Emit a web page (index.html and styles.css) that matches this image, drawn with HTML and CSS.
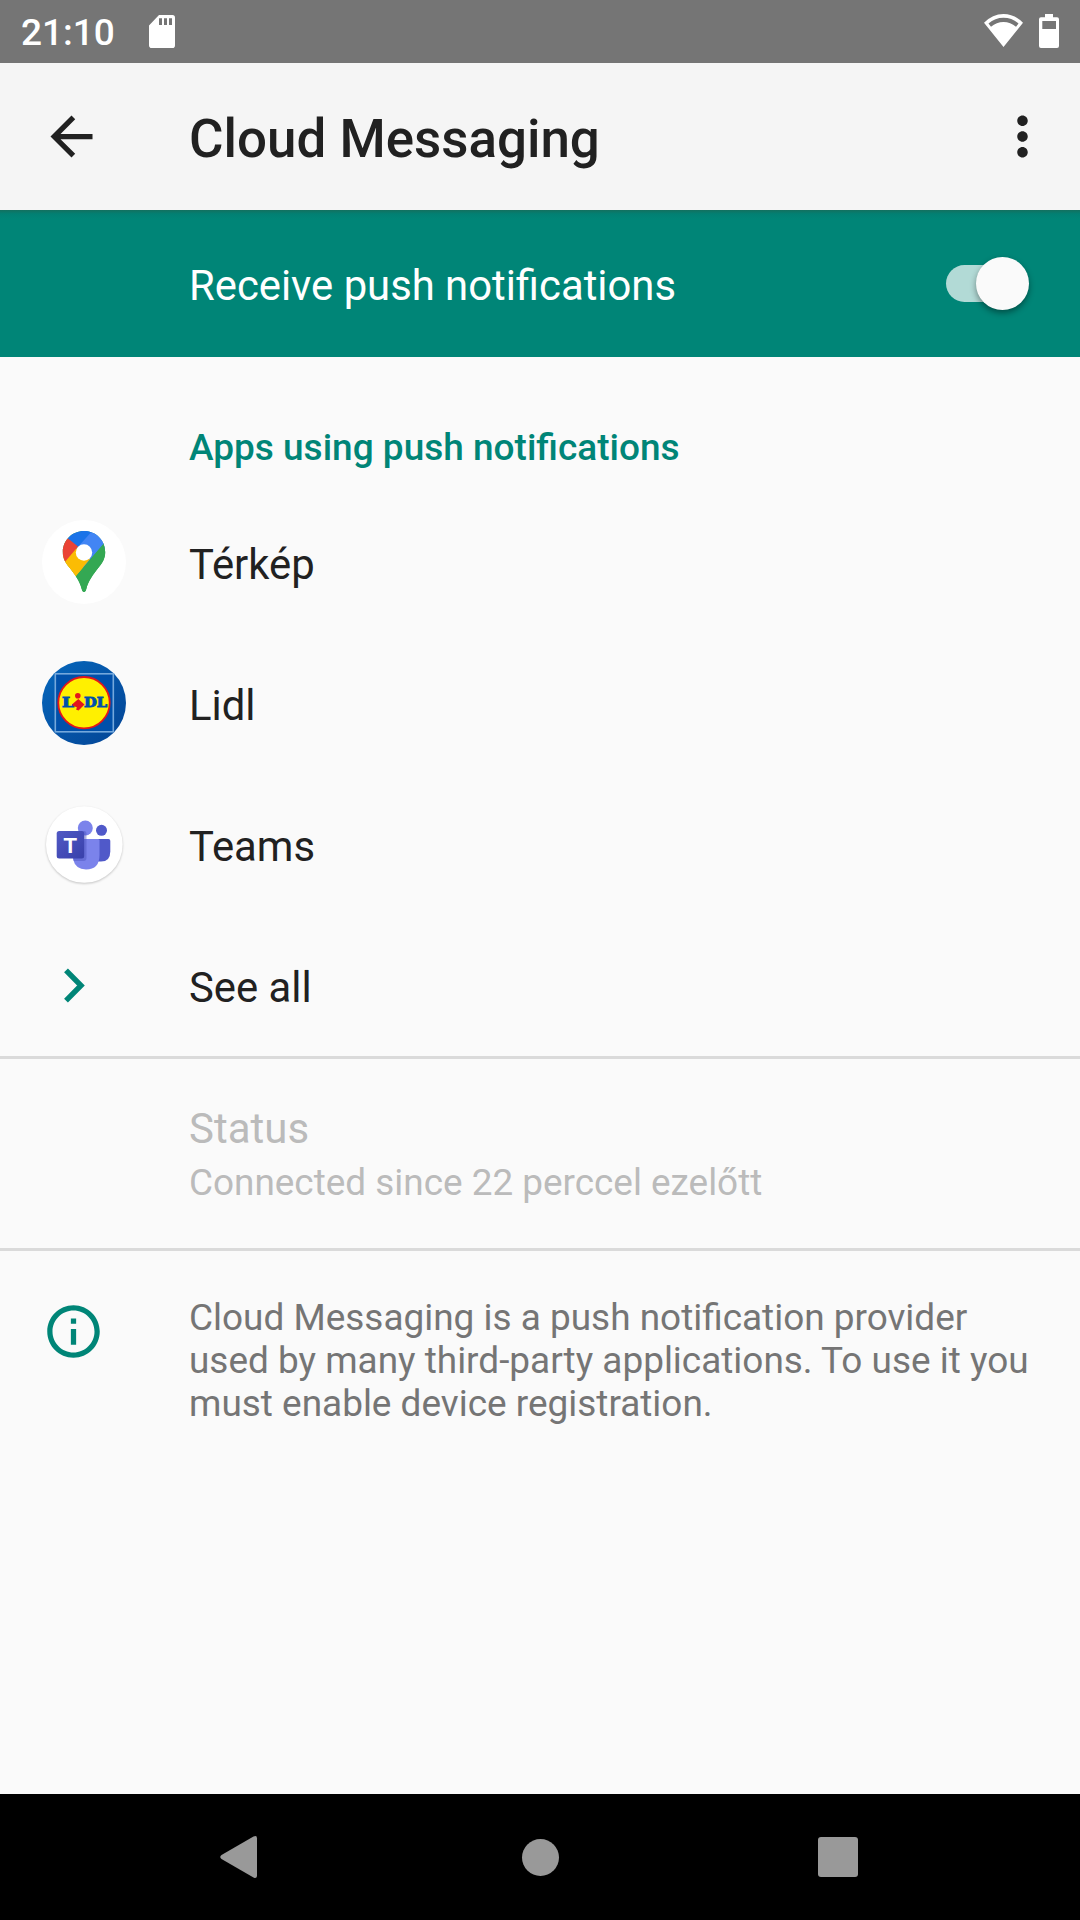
FILE: index.html
```html
<!DOCTYPE html>
<html lang="en">
<head>
<meta charset="utf-8">
<title>Cloud Messaging</title>
<link rel="stylesheet" href="styles.css">
</head>
<body>
<div class="screen">
  <div class="status-bar">
    <span class="clock">21:10</span>
    <svg class="sd-card" width="26" height="33" viewBox="0 0 26 33"><path fill="#fff" fill-rule="evenodd" d="M10 0H23.500Q26 0 26 2.800V30.200Q26 33 23.500 33H2.800Q0 33 0 30.200V10.500ZM10 3.300V10h3V3.300ZM15 3.300V10h3V3.300ZM20 3.300V10h3V3.300Z"/></svg>
    <svg class="wifi" width="39" height="33" viewBox="0 0 39 33"><path fill="#fff" fill-rule="evenodd" d="M19.500 33L0 8.800Q8.500 0 19.500 0T39 8.800ZM4.500 9.500L7 12.700Q12.500 8 19.500 8T32 12.700L34.500 9.500Q28 3.800 19.500 3.800T4.500 9.500Z"/></svg>
    <svg class="battery" width="20" height="34" viewBox="0 0 20 34"><path fill="#fff" fill-rule="evenodd" d="M6 0H14V3.300H18Q20 3.300 20 5.300V32Q20 34 18 34H2Q0 34 0 32V5.300Q0 3.300 2 3.300H6ZM3.300 7V15H17V7Z"/></svg>
  </div>

  <header class="app-bar">
    <svg class="back" width="63" height="63" viewBox="0 0 24 24"><path fill="#212121" d="M20 11H7.830l5.590-5.590L12 4l-8 8 8 8 1.410-1.410L7.830 13H20z"/></svg>
    <h1 class="title">Cloud Messaging</h1>
    <svg class="more" width="63" height="63" viewBox="0 0 24 24"><path fill="#212121" d="M12 8c1.100 0 2-.9 2-2s-.9-2-2-2-2 .9-2 2 .9 2 2 2zm0 2c-1.100 0-2 .9-2 2s.9 2 2 2 2-.9 2-2-.9-2-2-2zm0 6c-1.100 0-2 .9-2 2s.9 2 2 2 2-.9 2-2-.9-2-2-2z"/></svg>
  </header>

  <div class="switch-bar">
    <span class="switch-label">Receive push notifications</span>
    <div class="switch"><div class="thumb"></div></div>
  </div>

  <main class="content">
    <h2 class="category">Apps using push notifications</h2>

    <div class="row">
      <div class="icon-slot">
        <svg width="84" height="84" viewBox="0 0 84 84">
          <defs><clipPath id="pin"><path d="M42 11C30 11 20.800 20.500 20.800 32C20.800 38 23 42 27 47C33 55 37.500 60 39.700 69C40.300 71.300 41 72 42 72S43.700 71.300 44.300 69C46.500 60 51 55 57 47C61 42 63.200 38 63.200 32C63.200 20.500 54 11 42 11Z"/></clipPath></defs>
          <circle cx="42" cy="42" r="42" fill="#fff"/>
          <g clip-path="url(#pin)">
            <rect x="18" y="9" width="48" height="65" fill="#34a853"/>
            <path fill="#fbbc04" d="M14 38L38 25L54 34L33.500 56.500L26 63L14 50Z"/>
            <path fill="#4285f4" d="M46 9L70 9V22L42 49L34 40L36 25Z"/>
            <path fill="#34a853" d="M33.500 56.500L64 20.500L74 30V76H30Z"/>
            <path fill="#fbbc04" d="M33.500 56.500L48 39L36 26L23 43Z"/>
            <path fill="#4285f4" d="M36 26L52 9H70V14L48 39Z"/>
            <path fill="#1a73e8" d="M20 13L26 9H52L34 29L26 19Z"/>
            <path fill="#ea4335" d="M26 18.500L36 26.500L22 43L10 40V20Z"/>
          </g>
          <circle cx="42" cy="32.500" r="8.200" fill="#fff"/>
        </svg>
      </div>
      <span class="label">Térkép</span>
    </div>

    <div class="row">
      <div class="icon-slot">
        <svg width="84" height="84" viewBox="0 0 84 84">
          <defs><linearGradient id="blue" x1="0" y1="0" x2="1" y2="1"><stop offset="0" stop-color="#0668bd"/><stop offset=".5" stop-color="#0555a8"/><stop offset="1" stop-color="#034495"/></linearGradient></defs>
          <circle cx="42" cy="42" r="42" fill="url(#blue)"/>
          <rect x="13.300" y="12.800" width="58" height="58" fill="#0050aa" stroke="#74a8dc" stroke-width="1.600"/>
          <circle cx="42" cy="41.700" r="25.700" fill="#fff000" stroke="#e3161b" stroke-width="1.800"/>
          <g class="lidl-type"><text x="20" y="46" textLength="12" lengthAdjust="spacingAndGlyphs">L</text><text x="42" y="46" textLength="23" lengthAdjust="spacingAndGlyphs">DL</text></g>
          <circle cx="35.800" cy="34.700" r="2.800" fill="#e3161b"/>
          <path fill="#e3161b" d="M30.500 43L36.300 38L42.500 43.500L36.500 49.500L34 48.500L35 46.500L30.500 44.500Z"/>
        </svg>
      </div>
      <span class="label">Lidl</span>
    </div>

    <div class="row">
      <div class="icon-slot">
        <svg class="teams" width="84" height="84" viewBox="0 0 84 84">
          <defs><linearGradient id="tile" x1="0" y1="0" x2="1" y2="1"><stop offset="0" stop-color="#5059c4"/><stop offset="1" stop-color="#3940ab"/></linearGradient></defs>
          <circle class="teams-disc" cx="42.300" cy="42.500" r="38.300" fill="#fff"/>
          <circle cx="59.500" cy="28.300" r="5.500" fill="#5059c9"/>
          <path fill="#5059c9" d="M52 37H66.500Q68.300 37 68.300 38.800V49.500Q68.300 59.500 59 59.500H52Z"/>
          <circle cx="43.300" cy="26" r="7.500" fill="#7b83eb"/>
          <path fill="#7b83eb" d="M31 37H56Q57.500 37 57.500 38.500V53Q57.500 67.500 44 67.500Q33.500 67.500 31 57Z"/>
          <path fill="#4b53bc" opacity=".45" d="M37 29H42.500Q44.500 29 44.500 31.500V56Q44.500 59 41.500 59H31.500V37Z"/>
          <rect x="14.700" y="29" width="27.500" height="27.500" rx="2.500" fill="url(#tile)"/>
          <text class="teams-type" x="28.300" y="50.500" text-anchor="middle">T</text>
        </svg>
      </div>
      <span class="label">Teams</span>
    </div>

    <div class="row">
      <div class="icon-slot">
        <svg class="chevron" width="63" height="63" viewBox="0 0 63 63"><path fill="none" stroke="#008577" stroke-width="5.400" d="M24 16.300L39 31.500L24 46.700"/></svg>
      </div>
      <span class="label">See all</span>
    </div>

    <section class="status-row">
      <div class="status-title">Status</div>
      <div class="status-summary">Connected since 22 perccel ezelőtt</div>
    </section>

    <section class="info">
      <svg class="info-icon" width="63" height="63" viewBox="0 0 24 24"><path fill="#008577" d="M11 7h2v2h-2zm0 4h2v6h-2zm1-9C6.480 2 2 6.480 2 12s4.480 10 10 10 10-4.480 10-10S17.520 2 12 2zm0 18c-4.410 0-8-3.590-8-8s3.590-8 8-8 8 3.590 8 8-3.590 8-8 8z"/></svg>
      <p class="info-text">Cloud Messaging is a push notification provider used by many third-party applications. To use it you must enable device registration.</p>
    </section>
  </main>

  <nav class="nav-bar">
    <svg width="37" height="42" viewBox="0 0 37 42"><path fill="#999" d="M33.500 .6Q37 -1 37 2.200V39.800Q37 43 33.500 41.400L1.500 23Q-1 21 1.500 19Z"/></svg>
    <svg class="home" width="37" height="37" viewBox="0 0 37 37"><circle cx="18.500" cy="18.500" r="18.500" fill="#999"/></svg>
    <svg width="40" height="40" viewBox="0 0 40 40"><rect width="40" height="40" rx="3" fill="#999"/></svg>
  </nav>
</div>
</body>
</html>
```
FILE: styles.css
```css
* { box-sizing: border-box; }
body { margin: 0; font-family: Roboto, sans-serif; font-size: 41.8px; color: #212121; }
svg { display: block; flex: none; overflow: visible; }
h1, h2, p { margin: 0; }

.screen { width: 1080px; height: 1920px; display: flex; flex-direction: column; background: #fafafa; overflow: hidden; }

.status-bar { height: 63px; flex: none; display: flex; align-items: center; padding: 0 21px; background: #757575; color: #fff; }
.clock { width: 127.5px; font-size: 37px; font-weight: 500; line-height: 44px; padding-top: 3px; }
.wifi { margin-left: auto; margin-right: 16px; margin-bottom: 2px; }
.battery { margin-bottom: 1px; }

.app-bar { height: 147px; flex: none; display: flex; align-items: center; padding: 0 26px 0 40px; background: #f5f5f5; }
.back { margin-right: 86px; margin-bottom: 1px; }
.title { flex: 1; font-size: 52.9px; font-weight: 500; line-height: 62px; padding-top: 5px; }

.switch-bar { height: 147px; flex: none; display: flex; align-items: center; justify-content: space-between; padding: 0 52px 0 189px; background: linear-gradient(#14705f, #028073 4px, #008577 9px); color: #fff; }
.switch-label { line-height: 50px; padding-top: 4px; }
.switch { width: 82px; height: 37px; border-radius: 19px; background: #b2dad6; display: flex; align-items: center; justify-content: flex-end; }
.thumb { width: 53px; height: 53px; flex: none; margin-right: -1px; border-radius: 50%; background: #fafafa; box-shadow: 0 3px 6px rgba(0, 0, 0, .4); }

.content { flex: 1; }
.category { height: 135px; padding: 69px 0 0 189px; font-size: 37px; font-weight: 500; line-height: 43px; color: #008577; }
.row { height: 141px; display: flex; align-items: center; }
.icon-slot { width: 189px; padding: 0 0 1px 42px; }
.label { line-height: 50px; padding-top: 4px; }
.teams-disc { filter: drop-shadow(0 1.5px 1px rgba(0, 0, 0, .22)); }
.lidl-type { font: bold 12.5px "DejaVu Serif", serif; fill: #0050aa; stroke: #0050aa; stroke-width: .9px; }
.teams-type { font: bold 22px "Liberation Sans", sans-serif; fill: #fff; }

.status-row { height: 195px; padding: 42px 0 0 189px; border-top: 3px solid #dadada; border-bottom: 3px solid #dadada; color: #bbb; }
.status-title { font-size: 42px; line-height: 56px; }
.status-summary { font-size: 36.9px; line-height: 51px; }

.info { display: flex; padding: 45px 45px 0 42px; color: #757575; }
.info-icon { margin-top: 4px; margin-right: 84px; }
.info-text { font-size: 36.95px; line-height: 43px; }

.nav-bar { height: 126px; flex: none; display: flex; align-items: center; justify-content: space-between; padding: 0 222px 0 220px; background: #000; }
.home { margin-left: 5px; }
```
